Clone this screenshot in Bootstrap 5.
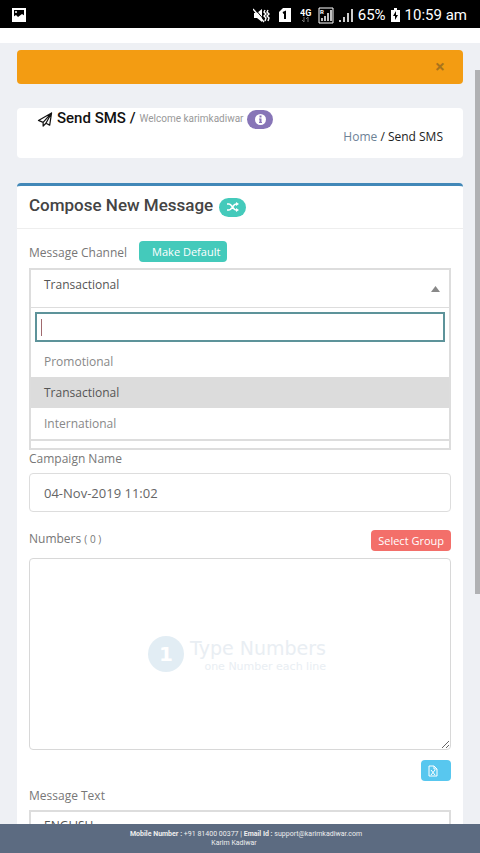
<!DOCTYPE html>
<html lang="en">
<head>
<meta charset="utf-8">
<meta name="viewport" content="width=device-width, initial-scale=1">
<title>Send SMS</title>
<link href="https://cdn.jsdelivr.net/npm/bootstrap@5.3.0/dist/css/bootstrap.min.css" rel="stylesheet">
<style>
body{font-family:"Open Sans","Noto Sans",sans-serif;font-size:12px;line-height:20px;color:#777;background:#eef0f4}
.screen{height:100vh}
.statusbar{height:28px;padding:2px 13px 0 12px;gap:5px;font:15px/26px Roboto,sans-serif}
.topstrip{height:15px}
.page{padding:7px 17px 0}
.notice{height:34px;padding:0 14px;background:#f39c12;border-radius:4px;margin-bottom:24px}
.notice button{color:#a8731c;font:bold 18px/34px "Open Sans",sans-serif;height:36px}
.crumbs{height:50px;padding:0 20px;border-radius:4px;margin-bottom:25px;color:#222}
.title-row{height:21px;gap:4px}
.crumbs h1{font:500 15px/20px Roboto,sans-serif;color:#111}
.crumbs small{font:10px/22px Roboto,sans-serif;color:#999}
.crumbs nav{line-height:16px}
.crumbs a{color:#6d8296}
.tag{height:19px;border-radius:10px}
.tag-info{width:26px;background:#8775b7}
.tag-mix{width:27px;background:#44cabb}
.panel{border-top:3px solid #4288b8;border-radius:4px 4px 0 0}
.panel-head{height:43px;padding:0 12px;border-bottom:1px solid #eee;gap:6px}
.panel-head h2{font:500 17px/40px Roboto,sans-serif;color:#444}
.panel-body{padding:0 12px}
.small-btn{height:21px;padding:0 7px;border:0;border-radius:4px;font-size:11px;line-height:20px;color:#fff}
.teal{background:#44cabb;padding-left:13px}
.red{background:#f36f6a}
.blue{width:30px;background:#58c7ef}
.frame{border:2px solid #ddd;padding-bottom:7px}
.picker-value{height:37px;padding:0 9px 0 13px;color:#555;line-height:30px}
.picker-list{border:solid #ddd;border-width:1px 0 2px;padding-top:4px}
.picker-list input{height:30px;border:2px solid #5d939a;padding:0 4px;margin:0 4px 4px;width:calc(100% - 8px);caret-color:transparent;background:linear-gradient(#a06a6e,#a06a6e) 4px 5px/1px 17px no-repeat}
.picker-list input:focus{outline:0}
.option{height:31px;padding:0 13px;line-height:32px;color:#888}
.option.active{background:#dcdcdc;color:#555}
.field{height:39px;border:1px solid #ddd;border-radius:4px;padding:0 14px;color:#666;font-size:13px}
.numbers{height:192px;border:1px solid #d8d8d8;border-radius:4px;background:none}
.hint{color:#e9eef3;pointer-events:none;gap:6px;padding-right:6px}
.hint b{width:36px;height:36px;border-radius:18px;background:#e2edf4;color:#fff;font:bold 20px/36px "DejaVu Sans",sans-serif}
.hint span{font:19px/24px "DejaVu Sans",sans-serif}
.hint em{font:11px/13px "DejaVu Sans",sans-serif}
.language{height:39px;border:2px solid #ddd;padding:0 13px 8px;color:#555;background:#fff;appearance:none}
.foot{height:29px;padding-top:6px;background:#5c6b81;color:#eee;font:7px/9px Roboto,sans-serif}
.foot a{color:#eee}
.foot-contact{padding-left:12px}
.foot-owner{padding-right:12px}
.scroller{width:5px;height:524px;top:70px;background:#b0b1b3}
.row-channel{height:39px;gap:12px;padding-top:12px}
.row-channel label{line-height:24px}
.row-campaign{height:23px;line-height:18px}
.row-numbers{height:46px;padding-top:18px}
.row-numbers label{line-height:18px}
.row-numbers small{font-size:10px}
.row-excel{height:31px;padding-top:10px}
.row-text{height:29px;padding-top:5px}
</style>
</head>
<body>
<div class="screen position-relative overflow-hidden">
<header class="statusbar bg-black text-white d-flex align-items-center">
<svg class="me-auto" width="14" height="14" viewBox="0 0 14 14"><path d="M1 1h12v12H1z" fill="#000" stroke="#fff" stroke-width="2"/><path d="M1 12V9l3-2 2 2 4-3 3 2v5H1z" fill="#fff"/><circle cx="4" cy="4" r="1" fill="#fff"/></svg>
<svg width="17" height="15" viewBox="0 0 17 15"><path d="M1 5h3l5-4v13l-5-4H1z" fill="#fff"/><path d="M2 1l10 12" stroke="#000"/><path d="M0 1l11 13M12 2l-1 2 2 2-2 2 2 2-1 3M15 2l-1 2 2 2-2 2 2 2-1 3" fill="none" stroke="#fff" stroke-width="1.400"/></svg>
<svg width="12" height="14" viewBox="0 0 12 14" class="ms-1"><path d="M4 0h8v14H0V4z" fill="#fff"/><path d="M4 5l2-1v7" fill="none" stroke="#000" stroke-width="2"/></svg>
<svg class="ms-1" width="13" height="15" viewBox="0 0 13 15"><text x="0" y="8" font-family="Roboto" font-weight="700" font-size="9" fill="#fff">4G</text><path d="M4 9v5M2 12l2 2M8 14V9l-2 2" stroke="#777" fill="none"/></svg>
<svg width="16" height="17" viewBox="0 0 16 17"><path d="M1 1h14v15H1z" fill="none" stroke="#fff"/><text x="2" y="7" font-family="Roboto" font-weight="700" font-size="6" fill="#fff">R</text><path d="M4 14v-3M7 14V9M10 14V6M13 14V3" stroke="#fff" stroke-width="1.500"/></svg>
<svg width="14" height="15" viewBox="0 0 14 15"><path d="M1 14v-2M5 14V9M9 14V5M13 14V1" stroke="#fff" stroke-width="1.600"/></svg>
<span>65%</span>
<svg width="9" height="14" viewBox="0 0 9 14"><path d="M3 0h3v2h3v12H0V2h3z" fill="#fff"/><path d="M5 3L2 8h2v4l3-5H5z" fill="#000"/></svg>
<span>10:59 am</span>
</header>
<div class="topstrip bg-white"></div>
<main class="page">
<div class="notice d-flex justify-content-end align-items-center" role="alert"><button type="button" class="border-0 bg-transparent p-0 px-1 pb-1" aria-label="Close">×</button></div>
<section class="crumbs bg-white">
<div class="title-row d-flex align-items-start">
<svg class="mt-1" width="16" height="15" viewBox="0 0 16 16" fill="none" stroke="#111" stroke-width="1.300" stroke-linejoin="round"><path d="M1 9L15 1l-2 13-4-2-3 3v-4zM6 11l9-10-6 11"/></svg>
<h1 class="m-0">Send SMS /</h1><small>Welcome karimkadiwar</small>
<span class="tag tag-info d-flex align-items-center justify-content-center align-self-end"><svg width="11" height="11" viewBox="0 0 11 11"><circle cx="5.500" cy="5.500" r="5.500" fill="#fff"/><path d="M4.500 1.500h2v2h-2zM4 4.500h2.500v3.500H7v1H4V8h.5V5.500H4z" fill="#8775b7"/></svg></span>
</div>
<nav class="text-end" aria-label="Breadcrumb"><a href="#" class="text-decoration-none">Home</a> / Send SMS</nav>
</section>
<section class="panel bg-white">
<div class="panel-head d-flex align-items-center pb-1"><h2 class="m-0">Compose New Message</h2><span class="tag tag-mix d-flex align-items-center justify-content-center mt-1"><svg width="12" height="10" viewBox="0 0 12 10" fill="none" stroke="#fff" stroke-width="1.500"><path d="M0 2h2c3 0 4 6 7 6h1M0 8h2c3 0 4-6 7-6h1"/><path d="M9 0l3 2-3 2zM9 6l3 2-3 2z" fill="#fff" stroke="none"/></svg></span></div>
<div class="panel-body">
<div class="row-channel d-flex"><label for="channel">Message Channel</label><button type="button" class="small-btn teal">Make Default</button></div>
<div class="frame">
<button id="channel" type="button" role="combobox" aria-expanded="true" aria-controls="channels" class="picker-value w-100 border-0 bg-white d-flex justify-content-between"><span>Transactional</span><svg class="align-self-center" width="9" height="6" viewBox="0 0 9 6"><path d="M0 6l4.500-6L9 6z" fill="#888"/></svg></button>
<div class="picker-list">
<input type="text" aria-label="Search channels" autofocus>
<div id="channels" role="listbox">
<div class="option" role="option">Promotional</div>
<div class="option active" role="option" aria-selected="true">Transactional</div>
<div class="option" role="option">International</div>
</div>
</div>
</div>
<div class="row-campaign"><label for="campaign">Campaign Name</label></div>
<input id="campaign" class="field w-100 d-block" type="text" value="04-Nov-2019 11:02">
<div class="row-numbers d-flex justify-content-between align-items-start"><label for="numbers">Numbers <small>( 0 )</small></label><button type="button" class="small-btn red">Select Group</button></div>
<div class="position-relative">
<textarea id="numbers" class="numbers w-100 d-block"></textarea>
<div class="hint position-absolute top-0 start-0 w-100 h-100 d-flex align-items-center justify-content-center"><b class="text-center">1</b><div class="d-flex flex-column align-items-end"><span>Type Numbers</span><em>one Number each line</em></div></div>
</div>
<div class="row-excel text-end"><button type="button" class="small-btn blue d-inline-flex align-items-center" aria-label="Import from Excel"><svg width="10" height="12" viewBox="0 0 10 12" fill="none" stroke="#fff"><path d="M1 1h5l3 3v7H1zM6 1v3h3M3 5l4 5M7 5l-4 5"/></svg></button></div>
<div class="row-text"><label for="language">Message Text</label></div>
<select id="language" class="language w-100 d-block"><option>ENGLISH</option></select>
</div>
</section>
</main>
<div class="scroller position-absolute end-0"></div>
</div>
<footer class="foot fixed-bottom text-center"><div class="foot-contact"><b>Mobile Number :</b> +91 81400 00377 | <b>Email Id :</b> <a href="mailto:support@karimkadiwar.com" class="text-decoration-none">support@karimkadiwar.com</a></div><div class="foot-owner">Karim Kadiwar</div></footer>
<script src="https://cdn.jsdelivr.net/npm/bootstrap@5.3.0/dist/js/bootstrap.bundle.min.js"></script>
</body>
</html>
